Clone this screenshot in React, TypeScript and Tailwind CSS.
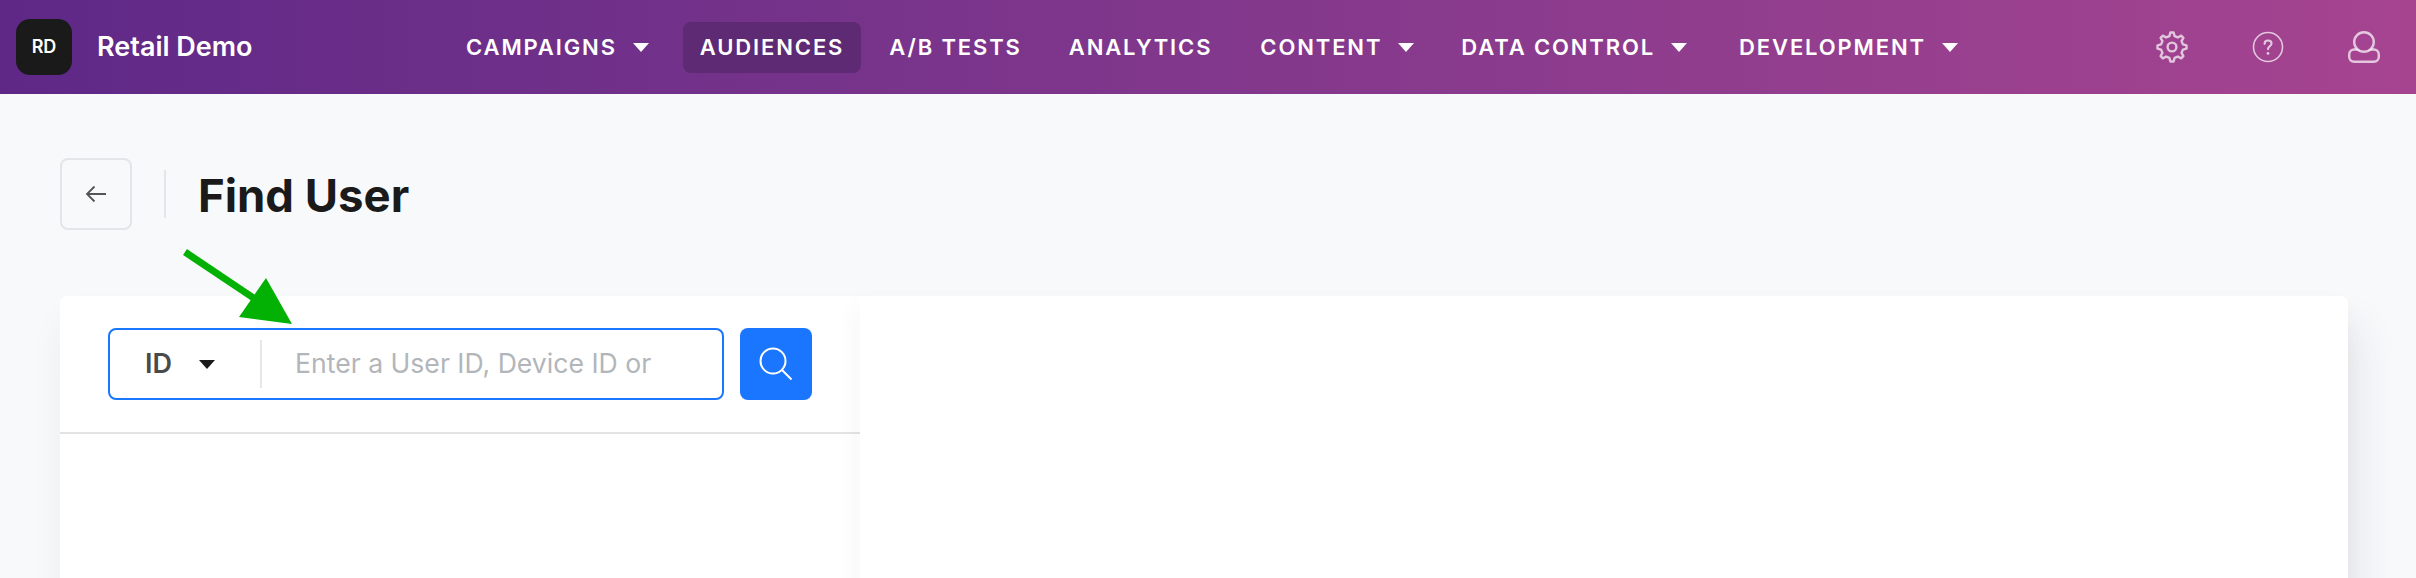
const font = "[font-family:Inter,'Liberation_Sans',sans-serif]";

function gearPath() {
  const pts: string[] = [];
  const teeth = 8;
  for (let i = 0; i < teeth; i++) {
    const a = (i / teeth) * Math.PI * 2 - Math.PI / 2;
    const step = (Math.PI * 2) / teeth;
    const seq: [number, number][] = [
      [11.2, a - step * 0.3],
      [14.6, a - step * 0.14],
      [14.6, a + step * 0.14],
      [11.2, a + step * 0.3],
    ];
    seq.forEach(([r, t]) => pts.push(`${(16 + r * Math.cos(t)).toFixed(2)} ${(16 + r * Math.sin(t)).toFixed(2)}`));
  }
  return `M${pts.join('L')}Z`;
}

function Caret({ className }: { className?: string }) {
  return (
    <svg width="16" height="9" viewBox="0 0 16 9" className={className}>
      <path d="M0 0H16L8 9Z" fill="currentColor" />
    </svg>
  );
}

function NavItem({ label, caret, active, className = '' }: { label: string; caret?: boolean; active?: boolean; className?: string }) {
  return (
    <a
      className={`flex h-[51px] items-center gap-[16px] rounded-lg px-[17px] text-[22px] font-semibold tracking-[0.085em] text-white ${
        active ? 'bg-[#5d2a73]' : ''
      } ${className}`}
    >
      <span>{label}</span>
      {caret && <Caret />}
    </a>
  );
}

function Header() {
  return (
    <header className="flex h-[94px] items-center bg-gradient-to-r from-[#5f2887] to-[#a64490] pl-4 pr-9">
      <div className="flex h-14 w-14 items-center justify-center rounded-[14px] bg-[#1a1a1a] text-lg font-semibold text-white">
        RD
      </div>
      <div className="ml-[25px] w-[352px] text-[27px] font-semibold text-white">Retail Demo</div>
      <nav className="flex items-center gap-[14px]">
        <NavItem label="CAMPAIGNS" caret className="mr-[3px]" />
        <NavItem label="AUDIENCES" active className="mr-[-3px]" />
        <NavItem label="A/B TESTS" className="mr-[-1px]" />
        <NavItem label="ANALYTICS" />
        <NavItem label="CONTENT" caret className="mr-[-1px]" />
        <NavItem label="DATA CONTROL" caret className="mr-[4px]" />
        <NavItem label="DEVELOPMENT" caret />
      </nav>
      <div className="ml-auto flex items-center gap-[64px] text-white/70">
        <svg width="32" height="32" viewBox="0 0 32 32" fill="none" stroke="currentColor" strokeWidth="2.4" strokeLinejoin="round">
          <path d={gearPath()} />
          <circle cx="16" cy="16" r="4.4" />
        </svg>
        <svg width="32" height="32" viewBox="0 0 32 32" fill="none" stroke="currentColor" strokeWidth="1.6" strokeLinecap="round">
          <circle cx="16" cy="16" r="14.5" />
          <path d="M12.6 12.8c0-2 1.5-3.3 3.5-3.3s3.4 1.3 3.4 3c0 2.7-3.5 2.8-3.5 5.6" strokeWidth="2.2" />
          <circle cx="16" cy="22.4" r="1.4" fill="currentColor" stroke="none" />
        </svg>
        <svg width="32" height="32" viewBox="0 0 32 32" fill="none" stroke="currentColor" strokeWidth="2.4">
          <rect x="1.2" y="18.5" width="29.6" height="12.3" rx="5" />
          <circle cx="16" cy="11" r="9.8" fill="#a34391" />
        </svg>
      </div>
    </header>
  );
}

function SearchPanel() {
  return (
    <div className="w-[800px] shrink-0">
      <div className="flex h-[138px] items-start gap-4 border-b-2 border-[#e2e3e5] px-12 pt-8">
        <div className="flex h-[72px] w-[616px] items-center rounded-lg border-2 border-[#1a76ff] bg-white">
          <div className="flex h-12 w-[152px] shrink-0 items-center border-r-2 border-[#e6e7e9] pl-[35px] text-[27px] font-semibold text-[#4a4a4a]">
            <span>ID</span>
            <Caret className="ml-[27px] text-[#1a1a1a]" />
          </div>
          <input
            className="min-w-0 flex-1 bg-transparent pl-[33px] pr-3 text-[26.6px] outline-none placeholder:text-[#b2b6ba]"
            placeholder="Enter a User ID, Device ID or"
          />
        </div>
        <button className="flex h-[72px] w-[72px] items-center justify-center rounded-lg bg-[#1a76ff] text-white">
          <svg width="34" height="34" viewBox="0 0 34 34" fill="none" stroke="currentColor" strokeWidth="2">
            <circle cx="14" cy="14" r="12.5" />
            <path d="M23 23l9.5 9.5" />
          </svg>
        </button>
      </div>
    </div>
  );
}

export default function App() {
  return (
    <div className={`relative h-[578px] overflow-hidden bg-[#f8f9fb] ${font}`}>
      <Header />
      <main className="pl-[60px] pr-[68px] pt-16">
        <div className="flex h-[72px] items-center">
          <button className="flex h-[72px] w-[72px] items-center justify-center rounded-lg border-2 border-[#e4e5e8] text-[#555]">
            <svg width="22" height="18" viewBox="0 0 22 18" fill="none" stroke="currentColor" strokeWidth="1.8">
              <path d="M21 9H2M9.5 1.5L2 9l7.5 7.5" />
            </svg>
          </button>
          <div className="ml-8 h-12 w-0.5 bg-[#e4e5e8]" />
          <h1 className="ml-8 pt-1 text-[45.5px] font-bold text-[#1a1a1a]">Find User</h1>
        </div>
        <div className="mt-[66px] flex h-[400px] rounded-t-lg bg-white shadow-[10px_30px_40px_rgba(40,45,60,0.1)]">
          <SearchPanel />
          <div className="flex-1 rounded-tr-lg bg-white shadow-[-4px_10px_25px_rgba(40,45,60,0.04)]" />
        </div>
      </main>
      {/* green callout arrow drawn on top of the screenshot */}
      <svg className="absolute left-[180px] top-[245px]" width="120" height="85" viewBox="0 0 120 85">
        <path d="M5 7L78 56" stroke="#02b103" strokeWidth="7" />
        <path d="M86 33L112 79L59 72Z" fill="#02b103" />
      </svg>
    </div>
  );
}
